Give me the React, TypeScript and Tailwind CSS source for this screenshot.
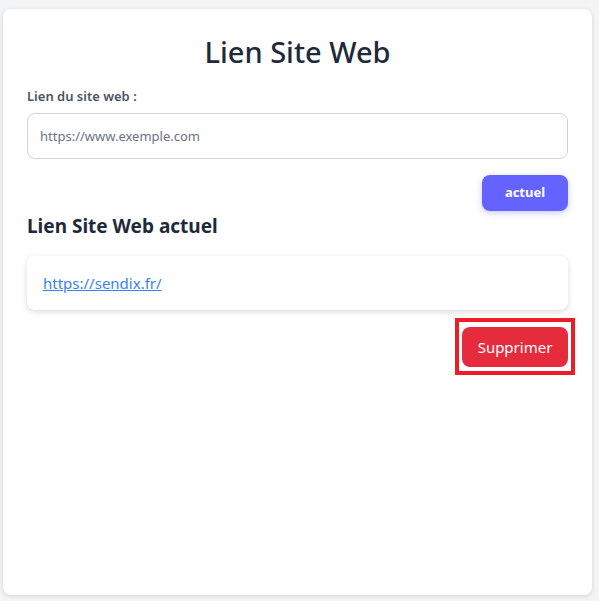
import React, { useState } from 'react';

const App: React.FC = () => {
  const [url, setUrl] = useState('');
  const current = 'https://sendix.fr/';

  return (
    <div
      className="min-h-[601px] bg-[#f3f4f6] pl-[3px] pr-[7px] pt-[9px] pb-[6px]"
      style={{ fontFamily: '"Noto Sans", "Open Sans", sans-serif' }}
    >
      {/* Card */}
      <div className="min-h-[586px] rounded-lg bg-white px-6 pt-[24px] shadow-[0_1px_4px_rgba(0,0,0,0.15)]">
        <h1 className="text-center text-[29px] leading-[38px] font-medium text-[#1e293b]">
          Lien Site Web
        </h1>

        <label className="mt-[16px] block text-[13px] leading-[18px] font-semibold text-[#4b5563]">
          Lien du site web :
        </label>
        <input
          value={url}
          onChange={(e) => setUrl(e.target.value)}
          placeholder="https://www.exemple.com"
          className="mt-[8px] h-[46px] w-full rounded-lg border border-[#d1d5db] px-3 text-[13px] text-[#374151] placeholder:text-[#6b7280] outline-none"
        />

        <div className="mt-[16px] flex justify-end">
          <button className="h-[36px] w-[86px] rounded-lg bg-[#6563ff] text-[13px] font-bold text-white shadow-[0_2px_6px_rgba(99,102,241,0.35)]">
            actuel
          </button>
        </div>

        <h2 className="mt-[2px] text-[19px] leading-[26px] font-bold text-[#1e293b]">
          Lien Site Web actuel
        </h2>

        {/* Current link */}
        <div className="mt-[17px] flex h-[54px] items-center rounded-lg bg-white px-4 shadow-[0_2px_6px_rgba(0,0,0,0.15)]">
          <a href={current} className="text-[15px] text-[#3b82f6] underline">
            {current}
          </a>
        </div>

        <div className="mt-[8px] flex justify-end">
          <div className="-mr-[7px] border-[4px] border-[#ee1c25] px-[3px] pt-[5px] pb-[4px]">
            <button className="h-[40px] w-[106px] rounded-lg bg-[#e62b3d] text-[15px] text-white">
              Supprimer
            </button>
          </div>
        </div>
      </div>
    </div>
  );
};

export default App;
